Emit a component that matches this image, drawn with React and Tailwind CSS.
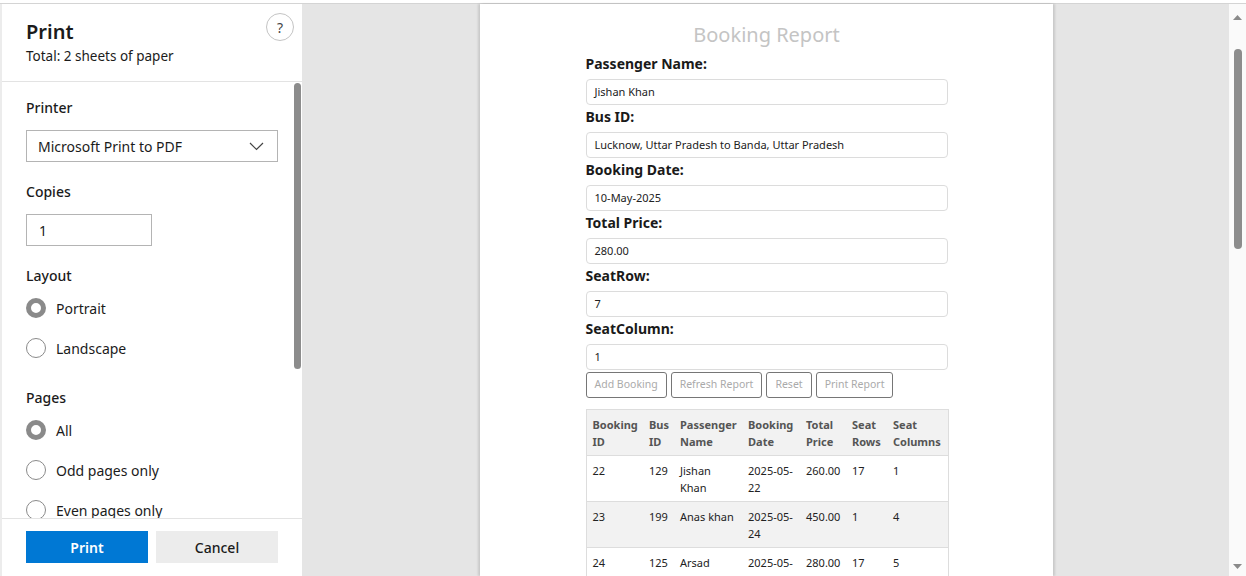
import React from 'react';

const font = { fontFamily: '"Noto Sans", "Open Sans", sans-serif' };

const Radio = ({ checked, label }) => (
  <div className="flex h-10 items-center gap-[10px]">
    {checked ? (
      <span className="h-5 w-5 rounded-full border-[5px] border-[#8a8a8a] bg-white" />
    ) : (
      <span className="h-5 w-5 rounded-full border border-[#8a8a8a] bg-white" />
    )}
    <span className="text-[14px] text-[#1b1b1b]">{label}</span>
  </div>
);

const Field = ({ label, value }) => (
  <div>
    <div className="text-[14px] font-bold leading-[19px] text-[#1a1a1a]">{label}</div>
    <div className="mt-[6px] mb-[2px] flex h-[26px] items-center rounded-[4px] border border-[#dcdcdc] px-[8px] text-[11px] text-[#222]">
      {value}
    </div>
  </div>
);

const rows = [
  { id: '22', bus: '129', name: ['Jishan', 'Khan'], date: ['2025-05-', '22'], price: '260.00', r: '17', c: '1' },
  { id: '23', bus: '199', name: ['Anas khan'], date: ['2025-05-', '24'], price: '450.00', r: '1', c: '4' },
  { id: '24', bus: '125', name: ['Arsad'], date: ['2025-05-', '10'], price: '280.00', r: '17', c: '5' },
];

const cols = ['w-[57px]', 'w-[31px]', 'w-[68px]', 'w-[58px]', 'w-[46px]', 'w-[41px]', 'w-[61px]'];

const Lines = ({ parts }) => (
  <>
    {parts.map((p, i) => (
      <div key={i}>{p}</div>
    ))}
  </>
);

export default function App() {
  return (
    <div className="flex h-[576px] w-[1246px] flex-col overflow-hidden bg-white" style={font}>
      {/* window top strip */}
      <div className="h-[4px] border-b border-[#d4d4d4] bg-white" />

      <div className="flex min-h-0 flex-1">
        {/* print settings panel */}
        <div className="flex w-[302px] flex-col border-l-2 border-[#ececec] bg-white">
          <div className="relative h-[78px] border-b border-[#e3e3e3] px-[24px] pt-[14px]">
            <div className="text-[20px] font-semibold leading-[28px] text-[#1b1b1b]">Print</div>
            <div className="text-[13.5px] leading-[20px] text-[#1b1b1b]">Total: 2 sheets of paper</div>
            <div className="absolute right-[8px] top-[9px] flex h-[28px] w-[28px] items-center justify-center rounded-full border border-[#c4c4c4] text-[14px] text-[#444]">
              ?
            </div>
          </div>

          <div className="flex min-h-0 flex-1">
            <div className="flex-1 overflow-hidden pl-[24px] pr-[16px] pt-[16px]">
              <div className="text-[14px] font-medium leading-[20px] text-[#1b1b1b]">Printer</div>
              <div className="mt-[12px] flex h-[32px] items-center justify-between border border-[#b4b4b4] pl-[11px] pr-[13px]">
                <span className="text-[14px] text-[#1b1b1b]">Microsoft Print to PDF</span>
                <svg width="15" height="9" viewBox="0 0 15 9" fill="none">
                  <polyline points="1,1 7.5,7.5 14,1" stroke="#444" strokeWidth="1.2" />
                </svg>
              </div>

              <div className="mt-[20px] text-[14px] font-medium leading-[20px] text-[#1b1b1b]">Copies</div>
              <div className="mt-[12px] flex h-[32px] w-[126px] items-center border border-[#b4b4b4] px-[12px] text-[14px] text-[#1b1b1b]">
                1
              </div>

              <div className="mt-[20px] text-[14px] font-medium leading-[20px] text-[#1b1b1b]">Layout</div>
              <div className="mt-[2px]">
                <Radio checked label="Portrait" />
                <Radio label="Landscape" />
              </div>

              <div className="mt-[20px] text-[14px] font-medium leading-[20px] text-[#1b1b1b]">Pages</div>
              <div className="mt-[2px]">
                <Radio checked label="All" />
                <Radio label="Odd pages only" />
                <Radio label="Even pages only" />
              </div>
            </div>
            <div className="w-[8px] pt-[1px]">
              <div className="h-[286px] w-[7px] rounded-[4px] bg-[#8c8c8c]" />
            </div>
          </div>

          <div className="flex h-[58px] gap-[8px] border-t border-[#e3e3e3] px-[24px] pt-[12px]">
            <div className="flex h-[32px] w-[122px] items-center justify-center bg-[#0078d4] text-[14px] font-semibold text-white">
              Print
            </div>
            <div className="flex h-[32px] w-[122px] items-center justify-center bg-[#ececec] text-[14px] font-medium text-[#1b1b1b]">
              Cancel
            </div>
          </div>
        </div>

        {/* preview area */}
        <div className="flex flex-1 justify-center bg-[#e5e5e5] pl-[1px]">
          <div className="w-[573px] bg-white shadow-[-2px_0_2px_rgba(0,0,0,0.12),2px_0_2px_rgba(0,0,0,0.12)]">
            <div className="ml-[106px] w-[362px] pt-[16px]">
              <div className="text-center text-[20px] leading-[30px] text-[#c4c4c4]">Booking Report</div>
              <div className="mt-[4px]">
                <Field label="Passenger Name:" value="Jishan Khan" />
                <Field label="Bus ID:" value="Lucknow, Uttar Pradesh to Banda, Uttar Pradesh" />
                <Field label="Booking Date:" value="10-May-2025" />
                <Field label="Total Price:" value="280.00" />
                <Field label="SeatRow:" value="7" />
                <Field label="SeatColumn:" value="1" />
              </div>
              <div className="mt-[1px] flex gap-[4px]">
                {['Add Booking', 'Refresh Report', 'Reset', 'Print Report'].map((b) => (
                  <div
                    key={b}
                    className="flex h-[26px] items-center rounded-[3px] border border-[#767676] bg-white px-[8px] text-[10.5px] text-[#aaaaaa]"
                  >
                    {b}
                  </div>
                ))}
              </div>

              <table className="mt-[11px] w-[362px] table-fixed border-collapse border border-[#dddddd] text-[11px] leading-[17px]">
                <thead>
                  <tr className="bg-[#f2f2f2] text-left font-bold text-[#555]">
                    {[['Booking', 'ID'], ['Bus', 'ID'], ['Passenger', 'Name'], ['Booking', 'Date'], ['Total', 'Price'], ['Seat', 'Rows'], ['Seat', 'Columns']].map((h, i) => (
                      <th key={i} className={`${cols[i]} h-[46px] border-b border-[#dddddd] px-[6px] align-middle font-bold`}>
                        <Lines parts={h} />
                      </th>
                    ))}
                  </tr>
                </thead>
                <tbody className="text-[#222]">
                  {rows.map((r, i) => (
                    <tr key={r.id} className={i % 2 === 1 ? 'bg-[#f2f2f2]' : 'bg-white'}>
                      {[[r.id], [r.bus], r.name, r.date, [r.price], [r.r], [r.c]].map((c, j) => (
                        <td key={j} className="h-[46px] border-b border-[#dddddd] px-[6px] pt-[6px] align-top">
                          <Lines parts={c} />
                        </td>
                      ))}
                    </tr>
                  ))}
                </tbody>
              </table>
            </div>
          </div>
        </div>

        {/* right scrollbar */}
        <div className="flex w-[17px] flex-col items-center bg-[#fafafa] pt-[11px]">
          <svg width="9" height="5" viewBox="0 0 9 5">
            <polygon points="0,5 4.5,0 9,5" fill="#8a8a8a" />
          </svg>
          <div className="mt-[29px] h-[200px] w-[8px] rounded-[4px] bg-[#8c8c8c]" />
          <div className="flex-1" />
          <svg className="mb-[7px]" width="9" height="5" viewBox="0 0 9 5">
            <polygon points="0,0 9,0 4.5,5" fill="#8a8a8a" />
          </svg>
        </div>
      </div>
    </div>
  );
}
